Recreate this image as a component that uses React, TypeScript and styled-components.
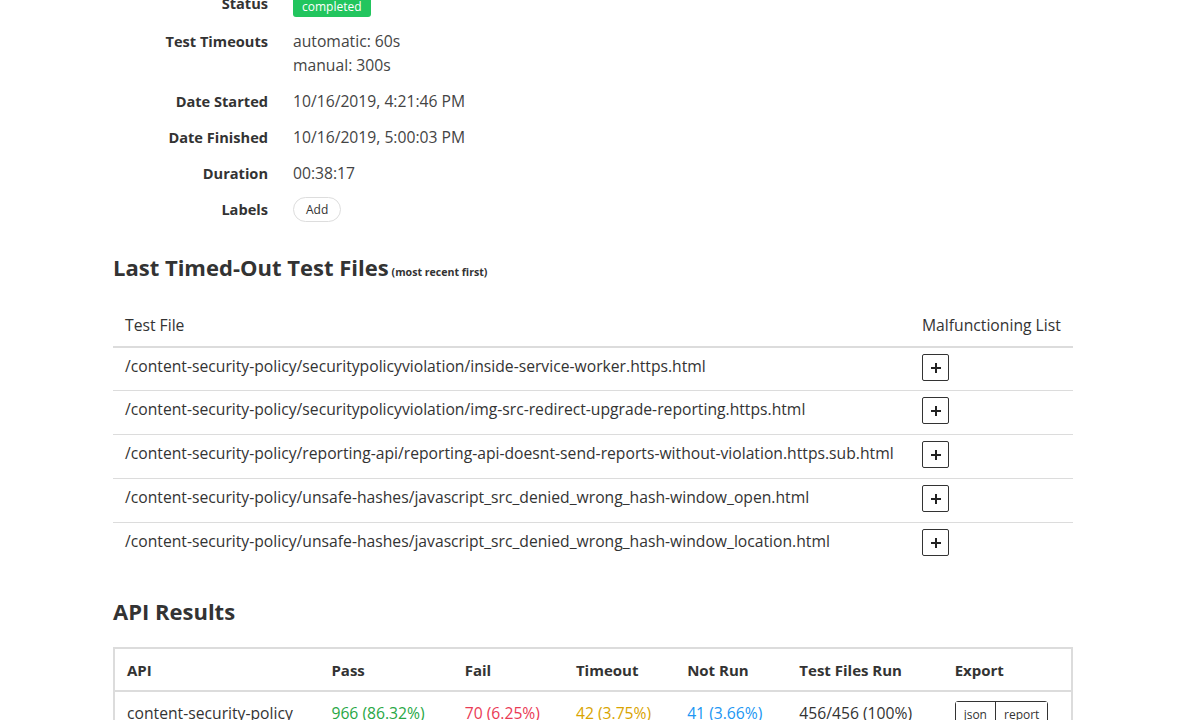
import React from "react";
import styled, { createGlobalStyle } from "styled-components";

const Global = createGlobalStyle`
  html, body { margin: 0; padding: 0; background: #fff; }
  body {
    font-family: "Open Sans", "Noto Sans", sans-serif;
    color: #333;
    font-size: 15.7px;
    line-height: 24px;
    overflow: hidden;
  }
`;

const Page = styled.div`
  width: 960px;
  margin: -7px 0 0 113px;
`;

const InfoGrid = styled.dl`
  display: grid;
  grid-template-columns: 155px 1fr;
  grid-auto-rows: minmax(24px, auto);
  column-gap: 25px;
  row-gap: 12px;
  margin: 0;
`;

const Label = styled.dt<{ $lift?: boolean }>`
  font-weight: 700;
  font-size: 14.6px;
  text-align: right;
  color: #333;
  margin-top: ${(p) => (p.$lift ? "-2px" : "0")};
`;

const Value = styled.dd`
  margin: 0;
  color: #444;
  display: flex;
  flex-direction: column;
  align-items: flex-start;
`;

const Badge = styled.span`
  display: inline-block;
  background: #22c55e;
  color: #fff;
  font-size: 12px;
  line-height: 20px;
  padding: 0 9px;
  border-radius: 3px;
  margin-top: 4px;
`;

const PillButton = styled.button`
  font-family: inherit;
  font-size: 12px;
  line-height: 23px;
  padding: 0 12px;
  background: #fff;
  color: #333;
  border: 1px solid #ddd;
  border-radius: 13px;
`;

const Heading = styled.h2<{ $before: number; $after: number }>`
  font-size: 22px;
  font-weight: 700;
  color: #333;
  margin: ${(p) => p.$before}px 0 ${(p) => p.$after}px;
  line-height: 30px;
`;

const Small = styled.small`
  font-size: 10.6px;
  font-weight: 700;
  margin-left: 3px;
`;

const Table = styled.table`
  width: 100%;
  border-collapse: collapse;
`;

const Th = styled.th<{ $w?: number }>`
  text-align: left;
  font-weight: 400;
  padding: 9px 12px 9px;
  border-bottom: 2px solid #dcdcdc;
  white-space: nowrap;
  width: ${(p) => (p.$w ? `${p.$w}px` : "auto")};
  box-sizing: border-box;
`;

const Td = styled.td<{ $first?: boolean }>`
  padding: 6px 12px ${(p) => (p.$first ? 9 : 10)}px;
  border-top: ${(p) => (p.$first ? "none" : "1px solid #dcdcdc")};
  white-space: nowrap;
  vertical-align: top;
`;

const PlusButton = styled.button`
  width: 27px;
  height: 27px;
  padding: 0;
  background: #fff;
  border: 1px solid #333;
  border-radius: 2px;
  display: flex;
  align-items: center;
  justify-content: center;
  color: #222;
`;

const BoxedTable = styled.table`
  width: 100%;
  border-collapse: collapse;
  border: 2px solid #dcdcdc;
  table-layout: fixed;
`;

const BTh = styled.th`
  text-align: left;
  font-weight: 700;
  font-size: 15px;
  padding: 9px 12px 8px;
  border-bottom: 2px solid #dcdcdc;
  white-space: nowrap;
`;

const BTd = styled.td<{ $color?: string }>`
  padding: 9px 12px 6px;
  white-space: nowrap;
  color: ${(p) => p.$color || "#333"};
  vertical-align: top;
`;

const ExportGroup = styled.div`
  display: inline-flex;
  border: 1px solid #333;
  border-radius: 3px;
  margin-top: -2px;
`;

const ExportButton = styled.button<{ $first?: boolean }>`
  font-family: inherit;
  font-size: 12px;
  line-height: 26px;
  padding: 0 8px;
  background: #fff;
  color: #333;
  border: none;
  border-left: ${(p) => (p.$first ? "none" : "1px solid #333")};
`;

const Plus = () => (
  <svg width="12" height="12" viewBox="0 0 12 12">
    <path d="M6 1v10M1 6h10" stroke="#222" strokeWidth="2" />
  </svg>
);

const files = [
  "/content-security-policy/securitypolicyviolation/inside-service-worker.https.html",
  "/content-security-policy/securitypolicyviolation/img-src-redirect-upgrade-reporting.https.html",
  "/content-security-policy/reporting-api/reporting-api-doesnt-send-reports-without-violation.https.sub.html",
  "/content-security-policy/unsafe-hashes/javascript_src_denied_wrong_hash-window_open.html",
  "/content-security-policy/unsafe-hashes/javascript_src_denied_wrong_hash-window_location.html",
];

const colWidths = [205, 133, 111, 111, 112, 155, 129];

export default function App() {
  return (
    <>
      <Global />
      <Page>
        <InfoGrid>
          <Label $lift>Status</Label>
          <Value>
            <Badge>completed</Badge>
          </Value>
          <Label>Test Timeouts</Label>
          <Value>
            <span>automatic: 60s</span>
            <span>manual: 300s</span>
          </Value>
          <Label>Date Started</Label>
          <Value>10/16/2019, 4:21:46 PM</Value>
          <Label>Date Finished</Label>
          <Value>10/16/2019, 5:00:03 PM</Value>
          <Label>Duration</Label>
          <Value>00:38:17</Value>
          <Label>Labels</Label>
          <Value>
            <PillButton>Add</PillButton>
          </Value>
        </InfoGrid>

        <Heading $before={30} $after={17}>
          Last Timed-Out Test Files<Small>(most recent first)</Small>
        </Heading>
        <Table>
          <thead>
            <tr>
              <Th>Test File</Th>
              <Th $w={163}>Malfunctioning List</Th>
            </tr>
          </thead>
          <tbody>
            {files.map((f, i) => (
              <tr key={f}>
                <Td $first={i === 0}>{f}</Td>
                <Td $first={i === 0}>
                  <PlusButton>
                    <Plus />
                  </PlusButton>
                </Td>
              </tr>
            ))}
          </tbody>
        </Table>

        <Heading $before={30} $after={21}>
          API Results
        </Heading>
        <BoxedTable>
          <colgroup>
            {colWidths.map((w, i) => (
              <col key={i} style={{ width: w }} />
            ))}
          </colgroup>
          <thead>
            <tr>
              <BTh>API</BTh>
              <BTh>Pass</BTh>
              <BTh>Fail</BTh>
              <BTh>Timeout</BTh>
              <BTh>Not Run</BTh>
              <BTh>Test Files Run</BTh>
              <BTh>Export</BTh>
            </tr>
          </thead>
          <tbody>
            <tr>
              <BTd>content-security-policy</BTd>
              <BTd $color="#28a745">966 (86.32%)</BTd>
              <BTd $color="#ea3a55">70 (6.25%)</BTd>
              <BTd $color="#d9a400">42 (3.75%)</BTd>
              <BTd $color="#2196f3">41 (3.66%)</BTd>
              <BTd>456/456 (100%)</BTd>
              <BTd>
                <ExportGroup>
                  <ExportButton $first>json</ExportButton>
                  <ExportButton>report</ExportButton>
                </ExportGroup>
              </BTd>
            </tr>
          </tbody>
        </BoxedTable>
      </Page>
    </>
  );
}
